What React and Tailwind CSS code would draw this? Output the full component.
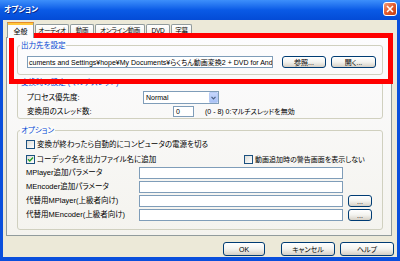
import React from 'react';

const FONT = "font-['Liberation_Sans','Noto_Sans_CJK_JP',sans-serif] [font-feature-settings:'palt']";

function XpButton({ children, className = '' }) {
  return (
    <div
      className={`flex items-center justify-center rounded-[3px] border border-[#003c74] bg-gradient-to-b from-[#ffffff] via-[#f3f3ef] to-[#d6d0c5] text-[7px] leading-none text-black ${className}`}
    >
      {children}
    </div>
  );
}

function TextBox({ className = '', children }) {
  return (
    <div className={`overflow-hidden whitespace-nowrap border border-[#7f9db9] bg-white text-[7px] leading-none flex items-center px-[1px] ${className}`}>
      {children}
    </div>
  );
}

function CheckBox({ checked }) {
  return (
    <div className="w-[9px] h-[9px] shrink-0 border border-[#1c5180] bg-gradient-to-br from-[#dcdcd7] to-[#ffffff] flex items-center justify-center">
      {checked && (
        <svg width="7" height="7" viewBox="0 0 7 7">
          <path d="M1 3.2 L2.8 5 L6 1.6" fill="none" stroke="#21a121" strokeWidth="1.4" />
        </svg>
      )}
    </div>
  );
}

function Group({ title, className = '', children }) {
  return (
    <div className={`relative rounded-[3px] border border-[#d0d0bf] ${className}`}>
      <span className="absolute left-[2px] top-[-5px] bg-[#fbfbf9] px-[1px] text-[7.5px] leading-[9px] text-[#0046d5]">
        {title}
      </span>
      {children}
    </div>
  );
}

function Tab({ label, selected, className = '' }) {
  if (selected) {
    return (
      <div className={`relative z-10 h-[16px] -mb-[1px] flex flex-col border-x border-[#919b9c] bg-[#fcfcfe] ${className}`}>
        <div className="h-[1px] bg-[#e68b2c] -mx-[1px] rounded-t-[2px]" />
        <div className="h-[2px] bg-[#ffc73c]" />
        <div className="flex-1 flex items-center justify-center text-[7px] leading-none whitespace-nowrap">{label}</div>
      </div>
    );
  }
  return (
    <div className={`h-[13px] flex items-center justify-center whitespace-nowrap rounded-t-[2px] border border-b-0 border-[#919b9c] bg-gradient-to-b from-[#ffffff] to-[#ecebe5] text-[6.5px] tracking-[-0.3px] leading-none ${className}`}>
      {label}
    </div>
  );
}

export default function App() {
  return (
    <div className={`w-[400px] h-[261px] flex flex-col bg-[#0a4fdc] ${FONT} text-black overflow-hidden relative`}>
      {/* title bar */}
      <div className="h-[20px] shrink-0 flex items-center justify-between bg-gradient-to-b from-[#3d8ffb] via-[#0a5ae6] to-[#044bd6] pl-[4px] pr-[3px]">
        <span className="text-[7.5px] font-bold text-white leading-none [text-shadow:1px_1px_0_#0a2a8a]">オプション</span>
        <div className="w-[14px] h-[14px] mt-[-3px] rounded-[3px] border border-white bg-gradient-to-br from-[#f29a79] via-[#e25a2c] to-[#c23d10] flex items-center justify-center">
          <svg width="8" height="8" viewBox="0 0 8 8">
            <path d="M1 1 L7 7 M7 1 L1 7" stroke="white" strokeWidth="1.6" />
          </svg>
        </div>
      </div>

      {/* body */}
      <div className="flex-1 mx-[3px] mb-[4px] bg-[#ece9d8] flex flex-col">
        {/* tabs */}
        <div className="h-[16px] mt-[1px] ml-[4px] flex items-end">
          <Tab label="全般" selected className="w-[27px]" />
          <Tab label="オーディオ" className="w-[34px] ml-[1px]" />
          <Tab label="動画" className="w-[24px] ml-[1px]" />
          <Tab label="オンライン動画" className="w-[50px] ml-[1px]" />
          <Tab label="DVD" className="w-[24px] ml-[1px]" />
          <Tab label="字幕" className="w-[21px] ml-[1px]" />
        </div>

        {/* panel */}
        <div className="ml-[3px] w-[386px] h-[199px] border border-[#919b9c] bg-gradient-to-b from-[#fcfcfe] to-[#f4f3ee] pl-[10px] pr-[8px] pt-[7px] text-[7.5px] leading-none">
          <Group title="出力先を設定" className="h-[30px] flex items-start pt-[10px] pl-[9px]">
            <TextBox className="w-[246px] h-[12px]">
              cuments and Settings¥hope¥My Documents¥らくちん動画変換2 + DVD for Android
            </TextBox>
            <XpButton className="w-[44px] h-[12px] ml-[9px]">参照...</XpButton>
            <XpButton className="w-[45px] h-[12px] ml-[5px]">開く...</XpButton>
          </Group>

          <Group title="変換時の設定 (マルチスレッド)" className="mt-[7px] h-[37px] flex flex-col pl-[9px] pt-[8px]">
            <div className="flex items-center h-[13px]">
              <span className="w-[116px]">プロセス優先度:</span>
              <div className="w-[76px] h-[13px] border border-[#7f9db9] bg-white flex items-center">
                <span className="flex-1 pl-[2px] text-[7px]">Normal</span>
                <div className="w-[9px] h-[11px] rounded-[1px] bg-gradient-to-b from-[#c6d6fc] to-[#a9c2f6] border border-[#b7cbf5] flex items-center justify-center">
                  <svg width="5" height="4" viewBox="0 0 5 4">
                    <path d="M0.5 0.8 L2.5 2.8 L4.5 0.8" fill="none" stroke="#4d6185" strokeWidth="1.2" />
                  </svg>
                </div>
              </div>
            </div>
            <div className="flex items-center h-[11px] mt-[2px]">
              <span className="w-[146px]">変換用のスレッド数:</span>
              <TextBox className="w-[21px] h-[11px] pl-[2px]">0</TextBox>
              <span className="ml-[11px] text-[7px]">(0 - 8) 0:マルチスレッドを無効</span>
            </div>
          </Group>

          <Group title="オプション" className="mt-[11px] h-[100px] flex flex-col pl-[8px] pt-[9px]">
            <div className="flex items-center h-[9px] gap-[2px]">
              <CheckBox />
              <span>変換が終わったら自動的にコンピュータの電源を切る</span>
            </div>
            <div className="flex items-center h-[9px] mt-[6px]">
              <CheckBox checked />
              <span className="w-[207px] ml-[2px]">コーデック名を出力ファイル名に追加</span>
              <CheckBox />
              <span className="ml-[2px] text-[7px]">動画追加時の警告画面を表示しない</span>
            </div>
            <div className="flex items-center h-[12px] mt-[3px]">
              <span className="w-[113px]">MPlayer追加パラメータ</span>
              <TextBox className="w-[204px] h-[12px]" />
            </div>
            <div className="flex items-center h-[12px] mt-[2px]">
              <span className="w-[113px]">MEncoder追加パラメータ</span>
              <TextBox className="w-[204px] h-[12px]" />
            </div>
            <div className="flex items-center h-[12px] mt-[2px]">
              <span className="w-[113px]">代替用MPlayer(上級者向け)</span>
              <TextBox className="w-[204px] h-[12px]" />
              <XpButton className="w-[24px] h-[12px] ml-[5px]">...</XpButton>
            </div>
            <div className="flex items-center h-[12px] mt-[2px]">
              <span className="w-[113px]">代替用MEncoder(上級者向け)</span>
              <TextBox className="w-[204px] h-[12px]" />
              <XpButton className="w-[24px] h-[12px] ml-[5px]">...</XpButton>
            </div>
          </Group>
        </div>

        {/* dialog buttons */}
        <div className="mt-[6px] flex justify-end pr-[3px]">
          <XpButton className="w-[42px] h-[14px]">OK</XpButton>
          <XpButton className="w-[54px] h-[14px] ml-[16px]">キャンセル</XpButton>
          <XpButton className="w-[54px] h-[14px] ml-[5px]">ヘルプ</XpButton>
        </div>
      </div>

      {/* red annotation frame */}
      <div className="absolute left-[9px] top-[33px] w-[384px] h-[51px] border-[5px] border-[#ff0000] pointer-events-none" />
    </div>
  );
}
